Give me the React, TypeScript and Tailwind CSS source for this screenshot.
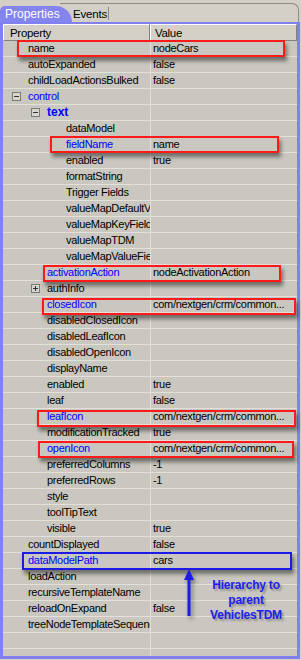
type Row = { name: string; value?: string; level: number; blue?: boolean; bold?: boolean; toggle?: "minus" | "plus" };

const rows: Row[] = [
  { name: "name", value: "nodeCars", level: 0 },
  { name: "autoExpanded", value: "false", level: 0 },
  { name: "childLoadActionsBulked", value: "false", level: 0 },
  { name: "control", level: 0, blue: true, toggle: "minus" },
  { name: "text", level: 1, blue: true, bold: true, toggle: "minus" },
  { name: "dataModel", level: 2 },
  { name: "fieldName", value: "name", level: 2, blue: true },
  { name: "enabled", value: "true", level: 2 },
  { name: "formatString", level: 2 },
  { name: "Trigger Fields", level: 2 },
  { name: "valueMapDefaultValue", level: 2 },
  { name: "valueMapKeyField", level: 2 },
  { name: "valueMapTDM", level: 2 },
  { name: "valueMapValueField", level: 2 },
  { name: "activationAction", value: "nodeActivationAction", level: 1, blue: true },
  { name: "authInfo", level: 1, toggle: "plus" },
  { name: "closedIcon", value: "com/nextgen/crm/common...", level: 1, blue: true },
  { name: "disabledClosedIcon", level: 1 },
  { name: "disabledLeafIcon", level: 1 },
  { name: "disabledOpenIcon", level: 1 },
  { name: "displayName", level: 1 },
  { name: "enabled", value: "true", level: 1 },
  { name: "leaf", value: "false", level: 1 },
  { name: "leafIcon", value: "com/nextgen/crm/common...", level: 1, blue: true },
  { name: "modificationTracked", value: "true", level: 1 },
  { name: "openIcon", value: "com/nextgen/crm/common...", level: 1, blue: true },
  { name: "preferredColumns", value: "-1", level: 1 },
  { name: "preferredRows", value: "-1", level: 1 },
  { name: "style", level: 1 },
  { name: "toolTipText", level: 1 },
  { name: "visible", value: "true", level: 1 },
  { name: "countDisplayed", value: "false", level: 0 },
  { name: "dataModelPath", value: "cars", level: 0, blue: true },
  { name: "loadAction", level: 0 },
  { name: "recursiveTemplateName", level: 0 },
  { name: "reloadOnExpand", value: "false", level: 0 },
  { name: "treeNodeTemplateSequence", level: 0 },
];

const indent = ["pl-[25px]", "pl-[44px]", "pl-[63px]"];
const toggleLeft = ["left-[9px]", "left-[28px]", "left-[47px]"];

function Toggle({ kind, level }: { kind: "minus" | "plus"; level: number }) {
  return (
    <span className={`absolute top-[3px] ${toggleLeft[level]} w-[9px] h-[9px] border border-[#7b7b7b] bg-[#d8d5ce] flex items-center justify-center`}>
      <span className="absolute w-[5px] h-[1px] bg-[#333]" />
      {kind === "plus" && <span className="absolute w-[1px] h-[5px] bg-[#333]" />}
    </span>
  );
}

function Box({ cls, color }: { cls: string; color: string }) {
  return <div className={`absolute ${cls} border-2 ${color} shadow-[2px_4px_4px_rgba(0,0,0,0.45)]`} />;
}

export default function App() {
  return (
    <div className="relative w-[301px] h-[660px] bg-[#d4d0c8] flex flex-col overflow-hidden font-['Liberation_Sans',Arial,sans-serif] text-[11px] tracking-[-0.3px] text-black">
      {/* tabs */}
      <div className="flex items-end h-[22px] shrink-0">
        <div className="relative z-10 w-[72px] h-[16px] bg-[#8484ee] rounded-tl-[5px] rounded-tr-[16px] pl-[5px] text-white text-[12px] leading-[16px] tracking-normal">
          Properties
        </div>
        <div className="-ml-[12px] mr-[2px] flex-1 h-[19px] border-t border-r border-[#8d8a85] rounded-tr-[7px] flex">
          <div className="pl-[13px] w-[49px] border-r border-[#8d8a85] mt-[3px] h-[13px] text-[11.5px] leading-[14px] tracking-[-0.2px]">Events</div>
        </div>
      </div>

      {/* grid panel */}
      <div className="flex-1 flex flex-col mr-[1px] mb-[1px] border-[#8080ee] border-l-[3px] border-r-[3px] border-b-[3px] border-t-[2px] overflow-hidden">
        <div className="flex h-[17px] shrink-0 bg-[#d4d0c8] text-[11.5px] leading-[14px]">
          <div className="w-[147px] border-t border-l border-white border-b border-r border-b-[#808080] border-r-[#808080] pl-[6px] pt-[1px]">Property</div>
          <div className="flex-1 border-t border-l border-white border-b border-r border-b-[#808080] border-r-[#808080] pl-[4px] pt-[1px]">Value</div>
        </div>
        <div className="flex-1 bg-[#c9c7bf]">
          {rows.map((r, i) => (
            <div key={i} className="flex h-[16px] border-b border-[#e3e0d9] leading-[15px]">
              <div className={`relative w-[148px] shrink-0 border-r border-[#e3e0d9] overflow-hidden whitespace-nowrap ${indent[r.level]}`}>
                {r.toggle && <Toggle kind={r.toggle} level={r.level === 0 ? 0 : 1} />}
                <span className={`${r.blue ? "text-[#0000ff]" : ""} ${r.bold ? "font-bold text-[12px] tracking-normal" : ""}`}>{r.name}</span>
              </div>
              <div className="flex-1 pl-[2px] whitespace-nowrap overflow-hidden">{r.value}</div>
            </div>
          ))}
          <div className="flex h-[16px] border-b border-[#e3e0d9]">
            <div className="w-[148px] border-r border-[#e3e0d9]" />
          </div>
          <div className="flex h-[16px]">
            <div className="w-[148px] border-r border-[#e3e0d9]" />
          </div>
        </div>
      </div>

      {/* annotations */}
      <Box cls="left-[17px] top-[40px] w-[268px] h-[17px]" color="border-[#ff1a1a]" />
      <Box cls="left-[50px] top-[136px] w-[229px] h-[17px]" color="border-[#ff1a1a]" />
      <Box cls="left-[43px] top-[265px] w-[238px] h-[17px]" color="border-[#ff1a1a]" />
      <Box cls="left-[42px] top-[298px] w-[254px] h-[17px]" color="border-[#ff1a1a]" />
      <Box cls="left-[37px] top-[410px] w-[259px] h-[17px]" color="border-[#ff1a1a]" />
      <Box cls="left-[38px] top-[441px] w-[256px] h-[17px]" color="border-[#ff1a1a]" />
      <Box cls="left-[22px] top-[552px] w-[270px] h-[18px]" color="border-[#1c1ce6]" />

      <svg className="absolute left-[181px] top-[569px] drop-shadow-[2px_3px_2px_rgba(0,0,0,0.4)]" width="16" height="50" viewBox="0 0 16 50">
        <polygon points="8,0 3,11 13,11" fill="#1c1ce6" />
        <rect x="6.5" y="10" width="3" height="37" fill="#1c1ce6" />
      </svg>
      <div className="absolute left-[200px] top-[578px] w-[92px] text-center font-['Liberation_Sans',Arial,sans-serif] font-bold text-[12px] leading-[15px] tracking-[-0.2px] text-[#2020ee] [text-shadow:2px_2px_2px_rgba(0,0,0,0.3)]">
        Hierarchy to
        <br />
        parent
        <br />
        VehiclesTDM
      </div>
    </div>
  );
}
